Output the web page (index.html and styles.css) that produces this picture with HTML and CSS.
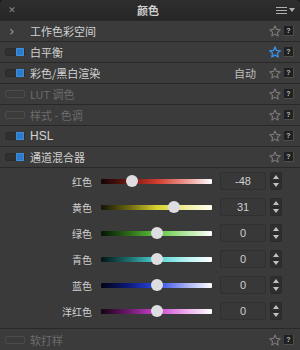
FILE: index.html
```html
<!DOCTYPE html>
<html lang="zh">

<head>
  <meta charset="UTF-8">
  <title>颜色</title>
  <link rel="stylesheet" href="styles.css">
</head>

<body>
  <div class="panel">
    <div class="panel-header">
      <span class="close">&#x2715;</span>
      <span class="title">颜色</span>
      <span class="menu">
        <span class="menu-lines"><i></i><i></i><i></i></span>
        <span class="menu-arrow"></span>
      </span>
    </div>

    <div class="tool-row">
      <span class="chevron">&#x203A;</span>
      <span class="label">工作色彩空间</span>
      <span class="tools"><svg class="star" viewBox="0 0 12 12"><polygon points="6,1 7.5,4.4 11.2,4.8 8.4,7.3 9.2,11 6,9.1 2.8,11 3.6,7.3 0.8,4.8 4.5,4.4"/></svg><span class="help">?</span></span>
    </div>

    <div class="tool-row">
      <span class="check on"></span>
      <span class="label">白平衡</span>
      <span class="tools"><svg class="star fav" viewBox="0 0 12 12"><polygon points="6,1 7.5,4.4 11.2,4.8 8.4,7.3 9.2,11 6,9.1 2.8,11 3.6,7.3 0.8,4.8 4.5,4.4"/></svg><span class="help">?</span></span>
    </div>

    <div class="tool-row">
      <span class="check on"></span>
      <span class="label">彩色/黑白渲染</span>
      <span class="status">自动</span>
      <span class="tools"><svg class="star" viewBox="0 0 12 12"><polygon points="6,1 7.5,4.4 11.2,4.8 8.4,7.3 9.2,11 6,9.1 2.8,11 3.6,7.3 0.8,4.8 4.5,4.4"/></svg><span class="help">?</span></span>
    </div>

    <div class="tool-row disabled">
      <span class="check"></span>
      <span class="label">LUT 调色</span>
      <span class="tools"><svg class="star" viewBox="0 0 12 12"><polygon points="6,1 7.5,4.4 11.2,4.8 8.4,7.3 9.2,11 6,9.1 2.8,11 3.6,7.3 0.8,4.8 4.5,4.4"/></svg><span class="help">?</span></span>
    </div>

    <div class="tool-row disabled">
      <span class="check"></span>
      <span class="label">样式 - 色调</span>
      <span class="tools"><svg class="star" viewBox="0 0 12 12"><polygon points="6,1 7.5,4.4 11.2,4.8 8.4,7.3 9.2,11 6,9.1 2.8,11 3.6,7.3 0.8,4.8 4.5,4.4"/></svg><span class="help">?</span></span>
    </div>

    <div class="tool-row">
      <span class="check on"></span>
      <span class="label latin">HSL</span>
      <span class="tools"><svg class="star" viewBox="0 0 12 12"><polygon points="6,1 7.5,4.4 11.2,4.8 8.4,7.3 9.2,11 6,9.1 2.8,11 3.6,7.3 0.8,4.8 4.5,4.4"/></svg><span class="help">?</span></span>
    </div>

    <div class="tool-row">
      <span class="check on"></span>
      <span class="label">通道混合器</span>
      <span class="tools"><svg class="star" viewBox="0 0 12 12"><polygon points="6,1 7.5,4.4 11.2,4.8 8.4,7.3 9.2,11 6,9.1 2.8,11 3.6,7.3 0.8,4.8 4.5,4.4"/></svg><span class="help">?</span></span>
    </div>

    <div class="mixer">
      <div class="slider-row">
        <span class="slider-label">红色</span>
        <span class="track red"><span class="knob" style="left: 28%"></span></span>
        <span class="value">-48</span>
        <span class="spin"><i class="up"></i><i class="down"></i></span>
      </div>
      <div class="slider-row">
        <span class="slider-label">黄色</span>
        <span class="track yellow"><span class="knob" style="left: 65.5%"></span></span>
        <span class="value">31</span>
        <span class="spin"><i class="up"></i><i class="down"></i></span>
      </div>
      <div class="slider-row">
        <span class="slider-label">绿色</span>
        <span class="track green"><span class="knob" style="left: 50%"></span></span>
        <span class="value">0</span>
        <span class="spin"><i class="up"></i><i class="down"></i></span>
      </div>
      <div class="slider-row">
        <span class="slider-label">青色</span>
        <span class="track cyan"><span class="knob" style="left: 50%"></span></span>
        <span class="value">0</span>
        <span class="spin"><i class="up"></i><i class="down"></i></span>
      </div>
      <div class="slider-row">
        <span class="slider-label">蓝色</span>
        <span class="track blue"><span class="knob" style="left: 50%"></span></span>
        <span class="value">0</span>
        <span class="spin"><i class="up"></i><i class="down"></i></span>
      </div>
      <div class="slider-row">
        <span class="slider-label">洋红色</span>
        <span class="track magenta"><span class="knob" style="left: 50%"></span></span>
        <span class="value">0</span>
        <span class="spin"><i class="up"></i><i class="down"></i></span>
      </div>
    </div>

    <div class="tool-row disabled footer">
      <span class="check"></span>
      <span class="label">软打样</span>
      <span class="tools"><svg class="star" viewBox="0 0 12 12"><polygon points="6,1 7.5,4.4 11.2,4.8 8.4,7.3 9.2,11 6,9.1 2.8,11 3.6,7.3 0.8,4.8 4.5,4.4"/></svg><span class="help">?</span></span>
    </div>
  </div>
</body>

</html>
```

FILE: styles.css
```css
body {
  margin: 0;
  background-color: #1c1c1c;
  font-family: "Noto Sans CJK SC", "Liberation Sans", sans-serif;
}

.panel {
  width: 300px;
  height: 350px;
  background-color: #3a3a3a;
  border-radius: 5px 5px 0 0;
  overflow: hidden;
}

.panel-header {
  height: 20px;
  display: flex;
  align-items: center;
  background: linear-gradient(#2e2e2e, #262626);
}

.close {
  width: 24px;
  text-align: center;
  color: #8a8a8a;
  font-size: 9px;
  font-family: "DejaVu Sans", sans-serif;
}

.title {
  flex: 1;
  text-align: center;
  color: #d0d0d0;
  font-size: 11px;
  font-weight: bold;
  margin-left: -4px;
}

.menu {
  width: 24px;
  display: flex;
  align-items: center;
  gap: 2px;
}

.menu-lines {
  display: flex;
  flex-direction: column;
  gap: 2px;
}

.menu-lines i {
  display: block;
  width: 11px;
  height: 1px;
  background-color: #b0b0b0;
}

.menu-arrow {
  width: 0;
  height: 0;
  border-left: 3px solid transparent;
  border-right: 3px solid transparent;
  border-top: 4px solid #b0b0b0;
}

.tool-row {
  height: 20px;
  display: flex;
  align-items: center;
  border-top: 1px solid #282828;
  background-color: #3b3b3b;
  color: #d2d2d2;
  font-size: 11px;
}

.chevron {
  width: 30px;
  padding-left: 9px;
  box-sizing: border-box;
  color: #9a9a9a;
  font-size: 14px;
  font-family: "DejaVu Sans", sans-serif;
  line-height: 1;
}

.check {
  width: 20px;
  height: 8px;
  margin: 0 5px 0 5px;
  border: 1px solid #2b2b2b;
  border-radius: 2px;
  background-color: #303030;
  box-sizing: border-box;
  position: relative;
}

.check.on::after {
  content: "";
  position: absolute;
  right: 0;
  top: -1px;
  width: 8px;
  height: 8px;
  background-color: #2d7bc9;
  border-radius: 1px;
  box-shadow: inset 0 0 0 1px #3c8ede;
}

.disabled .check {
  background-color: transparent;
  border-color: #4c4c4c;
}

.label {
  flex: 1;
}

.latin {
  font-family: "Liberation Sans", sans-serif;
  font-size: 12px;
}

.disabled {
  color: #6c6c6c;
}

.status {
  color: #bdbdbd;
  margin-right: 13px;
}

.tools {
  display: flex;
  align-items: center;
  gap: 3px;
  margin-right: 6px;
}

.star {
  width: 12px;
  height: 12px;
  fill: none;
  stroke: #7a7a7a;
  stroke-width: 1.1;
  stroke-linejoin: round;
}

.star.fav {
  stroke: #3a8fe8;
  stroke-width: 1.4;
}

.help {
  width: 9px;
  height: 9px;
  background-color: #202020;
  border-right: 1px solid #4e4e4e;
  border-bottom: 1px solid #4e4e4e;
  color: #bbb;
  font-size: 7px;
  font-weight: bold;
  line-height: 9px;
  text-align: center;
  font-family: "Liberation Sans", sans-serif;
}

.mixer {
  border-top: 1px solid #282828;
  background-color: #3a3a3a;
  padding: 0 0 4px 0;
}

.slider-row {
  height: 26px;
  display: flex;
  align-items: center;
}

.slider-label {
  width: 92px;
  text-align: right;
  color: #cfcfcf;
  font-size: 10px;
}

.track {
  width: 111px;
  height: 5px;
  margin-left: 9px;
  border-radius: 1px;
  position: relative;
}

.knob {
  position: absolute;
  top: -3.5px;
  width: 12px;
  height: 12px;
  margin-left: -6px;
  border-radius: 50%;
  background-color: #dedee2;
}

.red {
  background: linear-gradient(to right, #140404, #6e1810 25%, #d03a2c 50%, #ee9c98 78%, #fff);
}

.yellow {
  background: linear-gradient(to right, #141404, #6a6612 25%, #d6d22c 50%, #f2f0a2 78%, #fffff4);
}

.green {
  background: linear-gradient(to right, #041404, #2c6a18 25%, #5cc43a 50%, #b6eaa6 78%, #fff);
}

.cyan {
  background: linear-gradient(to right, #041414, #1c6c6c 25%, #4cd4d6 50%, #bcf2f2 78%, #fff);
}

.blue {
  background: linear-gradient(to right, #020214, #0c1a7c 25%, #2c48e4 50%, #aab2f2 78%, #fff);
}

.magenta {
  background: linear-gradient(to right, #140414, #6c1a6c 25%, #cc42cc 50%, #eeb0ee 78%, #fff);
}

.value {
  width: 46px;
  height: 18px;
  margin-left: 8px;
  box-sizing: border-box;
  border: 1px solid #303030;
  border-radius: 2px;
  background-color: #383838;
  color: #cfcfcf;
  font-size: 11px;
  line-height: 16px;
  text-align: center;
  font-family: "Liberation Sans", sans-serif;
}

.spin {
  width: 12px;
  height: 18px;
  margin-left: 4px;
  box-sizing: border-box;
  border: 1px solid #2a2a2a;
  border-radius: 2px;
  background-color: #2f2f2f;
  display: flex;
  flex-direction: column;
}

.spin i {
  flex: 1;
  display: flex;
  align-items: center;
  justify-content: center;
}

.spin .up {
  border-bottom: 1px solid #252525;
}

.spin i::before {
  content: "";
  width: 0;
  height: 0;
  border-left: 3px solid transparent;
  border-right: 3px solid transparent;
}

.spin .up::before {
  border-bottom: 4px solid #c0c0c0;
}

.spin .down::before {
  border-top: 4px solid #c0c0c0;
}

.footer {
  height: 22px;
}
```
